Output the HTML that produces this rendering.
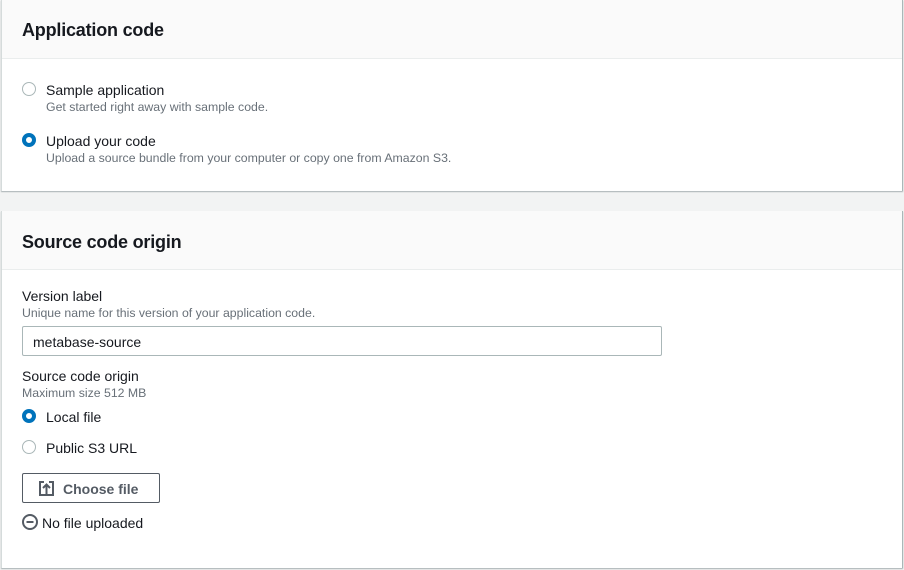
<!DOCTYPE html>
<html><head><style>
*{box-sizing:border-box;margin:0;padding:0}
body{width:904px;height:570px;background:#f2f3f3;font-family:"Liberation Sans",sans-serif;color:#16191f;position:relative;overflow:hidden}
.p{position:absolute;left:1px;width:902px;background:#fff;border-left:1px solid #d5dbdb;border-right:1px solid #aab7b8;box-shadow:0 1px 1px rgba(0,28,36,.3)}
.h{background:#fafafa;border-bottom:1px solid #eaeded;height:59px;padding:20px 20px 0 20px;font-size:18px;font-weight:bold;letter-spacing:-0.2px}
.a{position:absolute;font-size:14px}
.d{position:absolute;font-size:12.3px;color:#687078}
.r{position:absolute;width:14px;height:14px;border-radius:50%;border:1px solid #aab7b8;background:#fff}
.r.on{border:4px solid #0073bb}
</style></head><body>
<div class="p" style="top:0;height:191px">
<div class="h">Application code</div>
<div class="r" style="left:20px;top:82px"></div>
<div class="a" style="left:44px;top:82px">Sample application</div>
<div class="d" style="left:44px;top:100px">Get started right away with sample code.</div>
<div class="r on" style="left:20px;top:133px"></div>
<div class="a" style="left:44px;top:133px">Upload your code</div>
<div class="d" style="left:44px;top:151px">Upload a source bundle from your computer or copy one from Amazon S3.</div>
</div>
<div class="p" style="top:211px;height:357px">
<div class="h" style="padding-top:21px">Source code origin</div>
<div class="a" style="left:20px;top:77px">Version label</div>
<div class="d" style="left:20px;top:95px">Unique name for this version of your application code.</div>
<div style="position:absolute;left:20px;top:115px;width:640px;height:30px;border:1px solid #aab7b8;border-radius:2px;font-size:14px;padding:7px 10px">metabase-source</div>
<div class="a" style="left:20px;top:157px">Source code origin</div>
<div class="d" style="left:20px;top:175px">Maximum size 512 MB</div>
<div class="r on" style="left:20px;top:198px"></div>
<div class="a" style="left:44px;top:198px">Local file</div>
<div class="r" style="left:20px;top:229px"></div>
<div class="a" style="left:44px;top:229px">Public S3 URL</div>
<div style="position:absolute;left:20px;top:262px;width:138px;height:30px;border:1px solid #545b64;border-radius:2px;font-size:14px;font-weight:bold;color:#545b64;padding:7px 0 0 40px">Choose file
<svg style="position:absolute;left:16px;top:7px" width="15" height="15" viewBox="0 0 15 15" fill="none" stroke="#545b64" stroke-width="2"><path d="M5 1H1v13h13V1h-4"/><path d="M7.5 13V4M4 7l3.5-3.5L11 7"/></svg></div>
<svg style="position:absolute;left:20px;top:303px" width="16" height="16" viewBox="0 0 16 16" fill="none" stroke="#545b64" stroke-width="2"><circle cx="8" cy="8" r="7"/><path d="M4.5 8h7"/></svg>
<div class="a" style="left:40px;top:304px">No file uploaded</div>
</div>
</body></html>
